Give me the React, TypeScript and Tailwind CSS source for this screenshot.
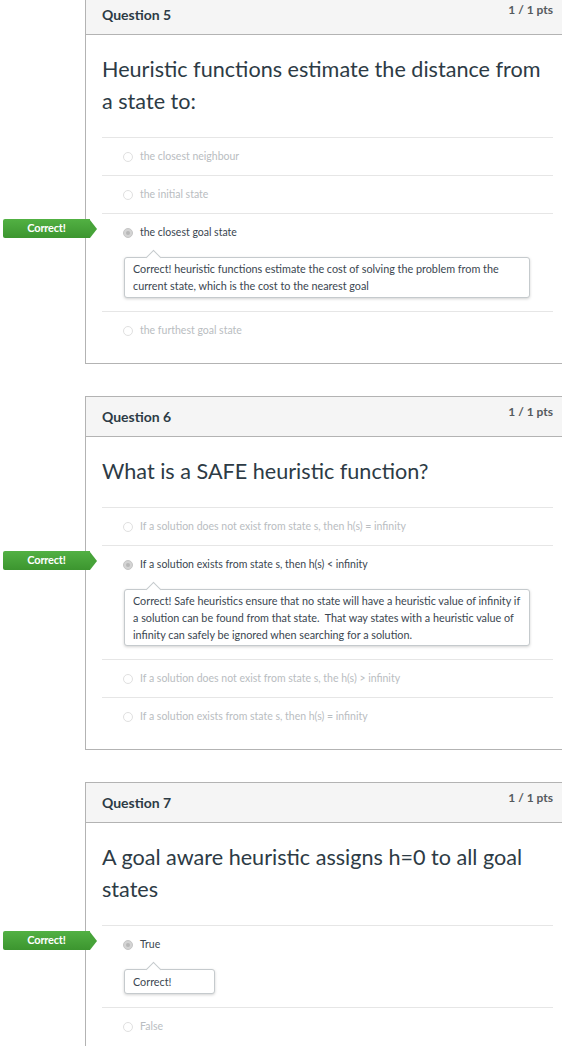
import React from "react";

type Answer = { text: string; selected?: boolean; comment?: React.ReactNode; commentCls?: string };

function Radio({ selected }: { selected?: boolean }) {
  return selected ? (
    <span className="w-[10px] h-[10px] rounded-full bg-[#d4d4d4] border border-[#c6c6c6] flex items-center justify-center shrink-0">
      <span className="w-[4px] h-[4px] rounded-full bg-[#b8b8b8]" />
    </span>
  ) : (
    <span className="w-[10px] h-[10px] rounded-full bg-white border border-[#e0e0e0] shrink-0" />
  );
}

function Badge() {
  return (
    <div className="absolute left-[-99px] top-[5px] flex items-center">
      <div className="w-[87px] h-[19px] rounded-l-[2px] bg-gradient-to-b from-[#52b143] to-[#3c952f] text-white text-[11px] font-bold flex items-center justify-center tracking-[-0.2px]">
        Correct!
      </div>
      <div className="w-0 h-0 border-y-[9.5px] border-y-transparent border-l-[7px] border-l-[#47a339]" />
    </div>
  );
}

function AnswerRow({ a }: { a: Answer }) {
  return (
    <div className="border-t border-[#e6e6e6] relative">
      {a.selected && <Badge />}
      <div className="h-[37px] flex items-center pl-[21px] gap-[7px]">
        <Radio selected={a.selected} />
        <span className={`text-[10.5px] ${a.selected ? "text-[#3a4650]" : "text-[#b9bdc1]"}`}>{a.text}</span>
      </div>
      {a.comment && (
        <div
          className={`relative ml-[22px] mt-[6px] mb-[13px] ${a.commentCls ?? "w-[406px] py-[2px]"} border border-[#c5cacd] rounded-[3px] bg-white shadow-[0_1px_3px_rgba(0,0,0,0.18)] px-[8px] text-[10.8px] leading-[17px] text-[#3a4650] whitespace-nowrap`}
        >
          <div className="absolute left-[23px] top-[-6px] w-[11px] h-[11px] rotate-45 bg-white border-l border-t border-[#c5cacd]" />
          <div className="relative">{a.comment}</div>
        </div>
      )}
    </div>
  );
}

function Card({ n, question, answers }: { n: number; question: React.ReactNode; answers: Answer[] }) {
  return (
    <div className="ml-[85px] w-[487px] border border-[#b3b3b3] bg-white">
      <div className="h-[40px] bg-[#f5f5f5] border-b border-[#b3b3b3] flex justify-between pl-[16px] pr-[18px]">
        <span className="pt-[10px] text-[14px] leading-[20px] font-bold text-[#2d3b45]">Question {n}</span>
        <span className="pt-[7px] text-[12px] leading-[16px] font-bold text-[#555a5e]">1 / 1 pts</span>
      </div>
      <div className="px-[16px] pt-[18px] pb-[20px] text-[21.6px] leading-[32px] text-[#2d3b45]">{question}</div>
      <div className="ml-[16px] mr-[18px] pb-[14px]">
        {answers.map((a, i) => (
          <AnswerRow key={i} a={a} />
        ))}
      </div>
    </div>
  );
}

export default function App() {
  return (
    <div className="w-[562px] h-[1046px] overflow-hidden bg-white font-['Lato','Noto_Sans',sans-serif]">
      <div className="-mt-[6px] flex flex-col gap-[32px]">
        <Card
          n={5}
          question={
            <>
              Heuristic functions estimate the distance from
              <br />a state to:
            </>
          }
          answers={[
            { text: "the closest neighbour" },
            { text: "the initial state" },
            {
              text: "the closest goal state",
              selected: true,
              comment: (
                <>
                  Correct! heuristic functions estimate the cost of solving the problem from the
                  <br />
                  current state, which is the cost to the nearest goal
                </>
              ),
              commentCls: "w-[406px] pt-[2px] pb-[3px]",
            },
            { text: "the furthest goal state" },
          ]}
        />
        <Card
          n={6}
          question={<>What is a SAFE heuristic function?</>}
          answers={[
            { text: "If a solution does not exist from state s, then h(s) = infinity" },
            {
              text: "If a solution exists from state s, then h(s) < infinity",
              selected: true,
              comment: (
                <>
                  Correct! Safe heuristics ensure that no state will have a heuristic value of infinity if
                  <br />
                  a solution can be found from that state.{"\u00a0 "}That way states with a heuristic value of
                  <br />
                  infinity can safely be ignored when searching for a solution.
                </>
              ),
            },
            { text: "If a solution does not exist from state s, the h(s) > infinity" },
            { text: "If a solution exists from state s, then h(s) = infinity" },
          ]}
        />
        <Card
          n={7}
          question={
            <>
              A goal aware heuristic assigns h=0 to all goal
              <br />
              states
            </>
          }
          answers={[
            { text: "True", selected: true, comment: <>Correct!</>, commentCls: "w-[91px] py-[3px]" },
            { text: "False" },
          ]}
        />
      </div>
    </div>
  );
}
